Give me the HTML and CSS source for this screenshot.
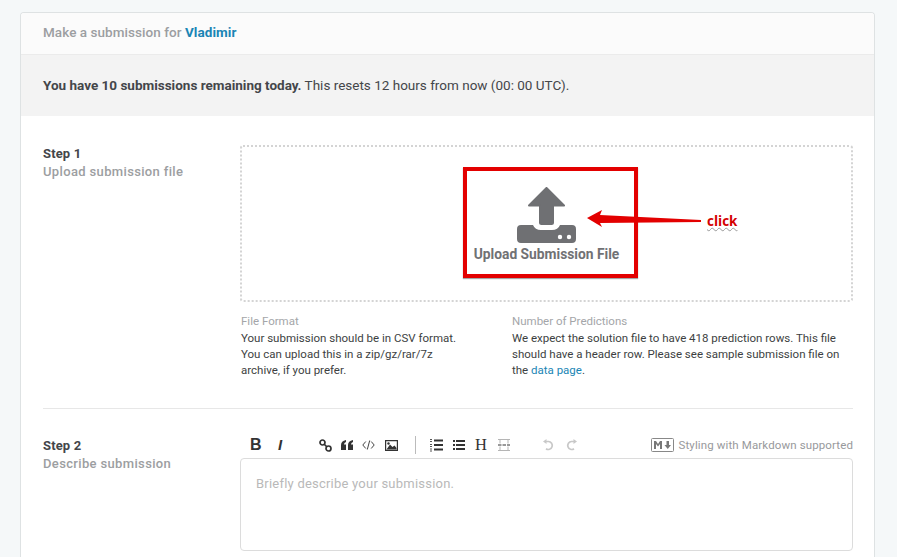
FILE: index.html
```html
<!DOCTYPE html>
<html lang="en">
<head>
<meta charset="utf-8">
<title>Make a submission</title>
<link rel="stylesheet" href="styles.css">
</head>
<body>
<main class="card">
  <header class="card-head">Make a submission for <a class="team" href="#">Vladimir</a></header>
  <div class="notice"><strong>You have 10 submissions remaining today.</strong> This resets 12 hours from now (00: 00 UTC).</div>
  <div class="card-body">
    <section class="step step-one">
      <div class="step-label"><div class="step-num">Step 1</div><div class="step-desc">Upload submission file</div></div>
      <div class="step-main">
        <div class="dropzone">
          <svg class="upload-icon" width="59" height="57" viewBox="0 0 59 57" aria-hidden="true">
            <path fill="#6f7073" stroke="#6f7073" stroke-width="2" stroke-linejoin="round" d="M29.500 1 47 18.500H36V35.500Q36 37 34.500 37H24.500Q23 37 23 35.500V18.500H12Z"/>
            <path fill="#6f7073" d="M4 38H16Q18 43 24 43H35Q41 43 43 38H55Q59 38 59 42V52Q59 56 55 56H4Q0 56 0 52V42Q0 38 4 38Z"/>
            <circle cx="43" cy="50" r="2.200" fill="#fff"/><circle cx="52" cy="50" r="2.200" fill="#fff"/>
          </svg>
          <div class="upload-text">Upload Submission File</div>
        </div>
        <div class="info">
          <div class="info-a"><div class="info-title">File Format</div>Your submission should be in CSV format. You can upload this in a zip/gz/rar/7z archive, if you prefer.</div>
          <div class="info-b"><div class="info-title">Number of Predictions</div>We expect the solution file to have 418 prediction rows. This file should have a header row. Please see sample submission file on the <a href="#">data page</a>.</div>
        </div>
      </div>
    </section>
    <section class="step step-two">
      <div class="step-label"><div class="step-num">Step 2</div><div class="step-desc">Describe submission</div></div>
      <div class="step-main">
        <div class="toolbar">
          <span class="tool-b">B</span>
          <span class="tool-i">I</span>
          <svg class="ic" width="13" height="13" viewBox="0 0 13 13" aria-hidden="true"><g fill="none" stroke="#333" stroke-width="1.700"><circle cx="3.500" cy="3.500" r="2.500"/><circle cx="9.500" cy="9.500" r="2.500"/><path d="M5 5l3 3"/></g></svg>
          <svg class="ic ic-quote" width="12" height="10" viewBox="0 0 12 10" aria-hidden="true"><path fill="#333" d="M0 5Q0 1 5 0V2Q3 2.500 3 4.500H5V10H0ZM7 5Q7 1 12 0V2Q10 2.500 10 4.500H12V10H7Z"/></svg>
          <svg class="ic ic-code" width="13" height="10" viewBox="0 0 13 10" aria-hidden="true"><path fill="none" stroke="#444" d="M3.800 1.500.8 5 3.800 8.500M9.200 1.500 12.200 5 9.200 8.500M7.700.5 5.300 9.500"/></svg>
          <svg class="ic ic-image" width="13" height="11" viewBox="0 0 13 11" aria-hidden="true"><path fill="#333" fill-rule="evenodd" d="M0 0H13V11H0ZM1.200 1.200V9.800H11.800V1.200Z"/><path fill="#333" d="M1.500 9.500 5 4.500 7.500 7 9.500 5.500 11.500 8V9.500Z"/><circle cx="3.500" cy="3.500" r="1.200" fill="#333"/></svg>
          <span class="sep"></span>
          <svg class="ic" width="13" height="14" viewBox="0 0 13 14" aria-hidden="true"><path fill="#333" d="M4 1.500H13V3.500H4ZM4 6H13V8H4ZM4 10.500H13V12.500H4Z"/><path fill="#555" d="M0 1H2V2H0ZM0 3H2V4H0ZM0 6H2V7H0ZM0 8H2V9H0ZM0 10.500H2V11.500H0ZM0 12.500H2V13.500H0Z"/></svg>
          <svg class="ic ic-ul" width="12" height="10" viewBox="0 0 12 10" aria-hidden="true"><path fill="#333" d="M3 0H12V2H3ZM3 4H12V6H3ZM3 8H12V10H3ZM0 0H2V2H0ZM0 4H2V6H0ZM0 8H2V10H0Z"/></svg>
          <span class="tool-h">H</span>
          <svg class="ic ic-hr" width="12" height="12" viewBox="0 0 12 12" aria-hidden="true"><path fill="none" stroke="#b5b5b5" d="M0 .5H12M2 0V4.500M10 0V4.500M2 7.500V12M10 7.500V12M0 11.500H12"/><path stroke="#333" stroke-dasharray="3.500 1" d="M0 6H12"/></svg>
          <svg class="ic ic-undo" width="11" height="12" viewBox="0 0 11 12" aria-hidden="true"><path fill="none" stroke="#c8c8c8" stroke-width="1.700" d="M2.500 2.500H5.500A4 4 0 1 1 3 9.800"/><path fill="#c8c8c8" d="M0 2.500 3.500 0V5Z"/></svg>
          <svg class="ic ic-redo" width="11" height="12" viewBox="0 0 11 12" aria-hidden="true"><path fill="none" stroke="#c8c8c8" stroke-width="1.700" d="M8.500 2.500H5.500A4 4 0 1 0 8 9.800"/><path fill="#c8c8c8" d="M11 2.500 7.500 0V5Z"/></svg>
          <span class="md"><svg width="23" height="14" viewBox="0 0 23 14" aria-hidden="true"><rect x=".5" y=".5" width="22" height="13" rx="1" fill="none" stroke="#888"/><path fill="#777" d="M3 11V3H5L7 6 9 3H11V11H9V6L7 8.500 5 6V11ZM15.500 3H18V7H20L16.750 11 13.500 7H15.500Z"/></svg>Styling with Markdown supported</span>
        </div>
        <div class="editor">Briefly describe your submission.</div>
      </div>
    </section>
  </div>
</main>

<div class="highlight"></div>
<svg class="arrow" width="122" height="26" viewBox="0 0 122 26" aria-hidden="true"><path fill="#e30000" d="M1 12 16 4 14 9 115 14V16L14 17 16 21Z"/></svg>
<span class="click">click</span>
</body>
</html>
```

FILE: styles.css
```css
* { box-sizing: border-box; }
html, body { height: 100%; }
body {
  margin: 0;
  padding: 12px 22px 0 20px;
  background: #f5f8f9;
  overflow: hidden;
  font-family: Roboto, "Liberation Sans", sans-serif;
  font-size: 11.500px;
  line-height: 16px;
  color: #3d3f42;
}
a { color: #1a85b5; text-decoration: none; }

.card {
  height: 545px;
  background: #fff;
  border: 1px solid #dee2e3;
  border-bottom: 0;
  border-radius: 4px 4px 0 0;
  overflow: hidden;
}
.card-head {
  height: 42px;
  padding: 11px 22px 0;
  background: #fbfbfb;
  border-bottom: 1px solid #ebebeb;
  font-size: 13.500px;
  line-height: 17px;
  color: #9c9ea1;
  font-weight: 500;
  letter-spacing: .05px;
}
.team { font-weight: 700; color: #1a85b5; }
.notice {
  height: 61px;
  padding: 22px 22px 0;
  background: #f3f3f3;
  font-size: 13.500px;
  line-height: 17px;
  color: #44464a;
}
.notice strong { font-weight: 700; }
.card-body { padding: 0 21px 0 22px; }
.step { display: grid; grid-template-columns: 197px 613px; }
.step-one { padding: 29px 0 30px; border-bottom: 1px solid #e7e7e7; }
.step-two { padding-top: 28px; }
.step-num {
  font-size: 13px;
  line-height: 18px;
  font-weight: 700;
  letter-spacing: .15px;
  color: #44464a;
}
.step-desc {
  font-size: 13px;
  line-height: 18px;
  font-weight: 500;
  letter-spacing: .35px;
  color: #9c9ea1;
}

.dropzone {
  height: 157px;
  border: 2px dotted #d4d4d4;
  border-radius: 3px;
  display: flex;
  flex-direction: column;
  align-items: center;
  padding-top: 40px;
}
.upload-icon { display: block; }
.upload-text {
  margin-top: 1px;
  font-size: 13.800px;
  line-height: 18px;
  font-weight: 700;
  color: #707174;
}

.info { display: flex; padding: 11px 0 0 1px; }
.info-a { width: 271px; padding-right: 45px; }
.info-b { flex: 1; padding-right: 5px; }
.info-title { margin-bottom: 1px; color: #a4a6a9; }

.toolbar { height: 20px; margin-top: -2px; display: flex; align-items: center; }
.ic { flex: none; display: block; }
.tool-b { width: 28px; margin-left: 10px; font: 700 16px/20px "Liberation Sans", sans-serif; color: #333; }
.tool-i { width: 41px; font: italic 700 15px/20px "Liberation Sans", sans-serif; color: #333; }
.ic-quote { margin-left: 9px; }
.ic-code { margin-left: 9px; }
.ic-image { margin-left: 10px; }
.sep { width: 1px; height: 18px; margin: 0 14px 0 17px; background: #bbb; }
.ic-ul { margin-left: 10px; }
.tool-h { width: 12px; margin-left: 10px; font: 400 16.500px/20px "Liberation Serif", serif; color: #333; }
.ic-hr { margin-left: 11px; }
.ic-undo { margin-left: 33px; }
.ic-redo { margin-left: 12px; }
.md {
  margin-left: auto;
  display: flex;
  align-items: center;
  gap: 5px;
  font-size: 11.500px;
  letter-spacing: .12px;
  color: #98999c;
}
.editor {
  height: 93px;
  margin-top: 3px;
  padding: 16px 15px;
  border: 1px solid #dcdcdc;
  border-radius: 4px;
  font-size: 13px;
  line-height: 17px;
  letter-spacing: .22px;
  color: #b9b9b9;
}

.highlight {
  position: absolute;
  left: 463px;
  top: 167px;
  width: 175px;
  height: 111px;
  border: 4px solid #e30000;
  box-shadow: 0 1px 1px rgba(0,0,0,.35);
}
.arrow { position: absolute; left: 586px; top: 206px; }
.click {
  position: absolute;
  left: 707px;
  top: 212px;
  font: 700 13.500px/18px "Open Sans", sans-serif;
  color: #d40000;
  text-decoration: underline wavy #999 1px;
}
```
